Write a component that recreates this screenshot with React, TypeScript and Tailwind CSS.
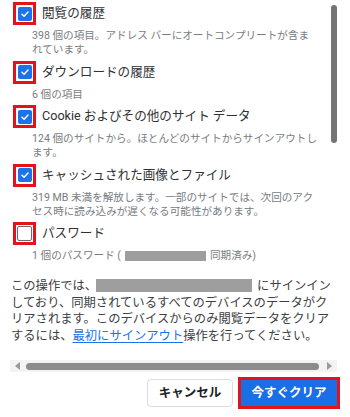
import React from 'react';

const Check = () => (
  <svg width="10" height="10" viewBox="0 0 10 10" fill="none">
    <path d="M2 5.2 L4.1 7.2 L8 3" stroke="white" strokeWidth="1.5" strokeLinecap="round" strokeLinejoin="round" />
  </svg>
);

interface ItemProps {
  label: React.ReactNode;
  sub: React.ReactNode;
  checked?: boolean;
}

const Item: React.FC<ItemProps> = ({ label, sub, checked = true }) => (
  <div className="mb-[3.5px]">
    <div className="flex items-center h-[23px]">
      <span className="ml-[13px] w-[23px] h-[23px] border-[3px] border-[#e3131b] flex items-center justify-center shrink-0">
        {checked ? (
          <span className="w-[14px] h-[14px] rounded-[2px] bg-[#1a73e8] flex items-center justify-center">
            <Check />
          </span>
        ) : (
          <span className="w-[15px] h-[15px] rounded-[2px] border-[1.5px] border-[#6b6b6b] bg-white" />
        )}
      </span>
      <span className="ml-[6px] text-[12.6px] text-[#303134]">{label}</span>
    </div>
    <div className="pl-[32px] mt-[4px] text-[10.6px] leading-[14px] text-[#787c81]">{sub}</div>
  </div>
);

export default function App() {
  return (
    <div
      className="relative w-[350px] h-[417px] bg-white overflow-hidden"
      style={{ fontFamily: 'Roboto, "Noto Sans CJK JP", sans-serif' }}
    >
      {/* vertical scrollbar thumb */}
      <div className="absolute left-[331px] top-[5px] w-[6px] h-[138px] rounded-full bg-[#747474]" />

      <div className="pt-[2px]">
        <Item
          label="閲覧の履歴"
          sub={<>398 個の項目。アドレス バーにオートコンプリートが含ま<br />れています。</>}
        />
        <Item label="ダウンロードの履歴" sub="6 個の項目" />
        <Item
          label="Cookie およびその他のサイト データ"
          sub={<>124 個のサイトから。ほとんどのサイトからサインアウトし<br />ます。</>}
        />
        <Item
          label="キャッシュされた画像とファイル"
          sub={<>319 MB 未満を解放します。一部のサイトでは、次回のアク<br />セス時に読み込みが遅くなる可能性があります。</>}
        />
        <Item
          checked={false}
          label="パスワード"
          sub={
            <span className="flex items-center">
              1 個のパスワード (
              <span className="inline-block w-[81px] h-[10px] bg-[#9e9e9e] mx-[4px]" />
              同期済み)
            </span>
          }
        />

        <p className="mt-[15px] px-[11px] text-[12.3px] leading-[16.6px] text-[#3c4043]">
          この操作では、
          <span className="inline-block align-middle w-[156px] h-[13px] bg-[#9e9e9e] -ml-[1px] mr-[5px] -mt-[2px]" />
          にサインイン
          <br />
          しており、同期されているすべてのデバイスのデータがク
          <br />
          リアされます。このデバイスからのみ閲覧データをクリア
          <br />
          するには、
          <span className="text-[#1a73e8] underline underline-offset-2">最初にサインアウト</span>
          操作を行ってください。
        </p>
      </div>

      {/* horizontal scrollbar */}
      <div className="absolute left-[10px] top-[360px] w-[327px] h-[12px] bg-[#f3f3f3] flex items-center">
        <span className="ml-[5px] w-0 h-0 border-y-[4px] border-y-transparent border-r-[5px] border-r-[#9a9a9a]" />
        <span className="ml-[6px] flex-1 h-[7px] rounded-full bg-[#8c8c8c]" />
        <span className="ml-[8px] mr-[5px] w-0 h-0 border-y-[4px] border-y-transparent border-l-[5px] border-l-[#9a9a9a]" />
      </div>

      <div className="absolute left-0 right-0 top-[377px] flex justify-end items-center pr-[10px]">
        <button className="w-[86px] h-[28px] rounded-[4px] border border-[#dadce0] bg-white text-[12.5px] font-bold text-[#202124] mr-[5px]">
          キャンセル
        </button>
        <span className="w-[102px] h-[32px] border-[3px] border-[#e3131b] flex">
          <button className="flex-1 bg-[#1a6ee6] text-white text-[12.5px] font-bold">今すぐクリア</button>
        </span>
      </div>
    </div>
  );
}
